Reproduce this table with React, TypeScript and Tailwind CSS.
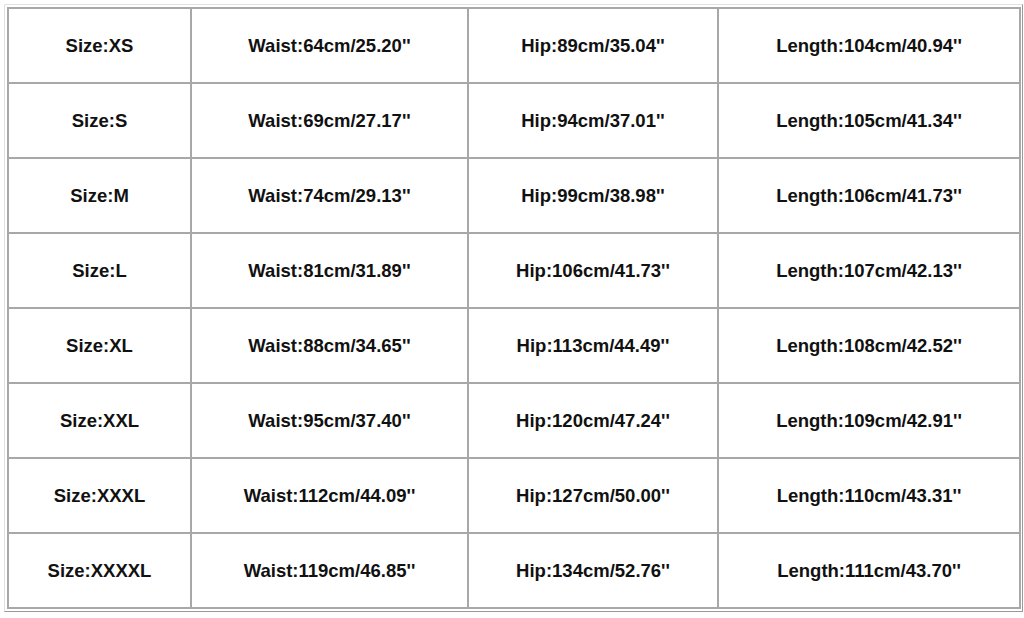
import React from "react";

const rows = [
  ["Size:XS", "Waist:64cm/25.20''", "Hip:89cm/35.04''", "Length:104cm/40.94''"],
  ["Size:S", "Waist:69cm/27.17''", "Hip:94cm/37.01''", "Length:105cm/41.34''"],
  ["Size:M", "Waist:74cm/29.13''", "Hip:99cm/38.98''", "Length:106cm/41.73''"],
  ["Size:L", "Waist:81cm/31.89''", "Hip:106cm/41.73''", "Length:107cm/42.13''"],
  ["Size:XL", "Waist:88cm/34.65''", "Hip:113cm/44.49''", "Length:108cm/42.52''"],
  ["Size:XXL", "Waist:95cm/37.40''", "Hip:120cm/47.24''", "Length:109cm/42.91''"],
  ["Size:XXXL", "Waist:112cm/44.09''", "Hip:127cm/50.00''", "Length:110cm/43.31''"],
  ["Size:XXXXL", "Waist:119cm/46.85''", "Hip:134cm/52.76''", "Length:111cm/43.70''"],
];

export default function App() {
  return (
    <div className="w-[1024px] h-[618px] bg-white pl-[4px] pt-[4px] overflow-hidden">
      <div className="w-[1019px] border border-t-[#e2e2e2] border-l-[#e2e2e2] border-r-[#9a9a9a] border-b-[#9a9a9a] p-[2px]">
        <div
          className="grid grid-cols-[181px_275px_248px_300px] auto-rows-[73px] gap-[2px] p-[2px] bg-[#a8a8a8] w-[1014px]"
          style={{ fontFamily: '"Liberation Sans", Arial, sans-serif' }}
        >
          {rows.flat().map((t, i) => (
            <div
              key={i}
              className="bg-white flex items-center justify-center text-[18.5px] font-bold text-[#111111]"
            >
              {t}
            </div>
          ))}
        </div>
      </div>
    </div>
  );
}
